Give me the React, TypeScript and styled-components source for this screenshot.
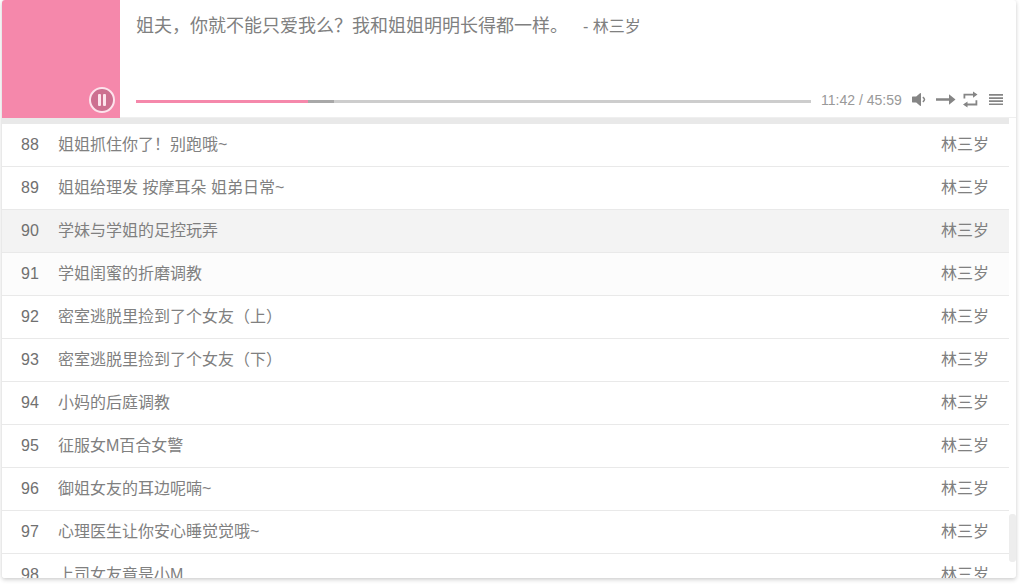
import React from "react";
import styled, { createGlobalStyle } from "styled-components";

const GlobalStyle = createGlobalStyle`
  *, *::before, *::after { box-sizing: border-box; }
  html, body, #root { height: 100%; }
  body {
    margin: 0;
    background: #fff;
    color: #808080;
    font-family: "Liberation Sans", "Noto Sans CJK SC", sans-serif;
    font-size: 16px;
    overflow: hidden;
  }
  button { font: inherit; color: inherit; border: 0; background: none; padding: 0; cursor: pointer; }
`;

const Page = styled.div`
  height: 100%;
  padding: 0 8px 9px 2px;
`;

const Player = styled.main`
  display: flex;
  flex-direction: column;
  height: 100%;
  background: #fff;
  border-radius: 3px;
  box-shadow: 0 2px 4px rgba(0, 0, 0, 0.16), 0 0 4px rgba(0, 0, 0, 0.06);
  overflow: hidden;
`;

const Header = styled.section`
  display: flex;
  flex: none;
`;

const Cover = styled.div`
  display: flex;
  align-items: flex-end;
  justify-content: flex-end;
  flex: none;
  width: 118px;
  height: 118px;
  padding: 5px;
  background: #f588ab;
`;

const PauseButton = styled.button`
  display: flex;
  align-items: center;
  justify-content: center;
  width: 26px;
  height: 26px;
  border: 2px solid #fde3ec;
  border-radius: 50%;
  background: #cd6f90;
`;

const Info = styled.div`
  display: flex;
  flex: 1;
  flex-direction: column;
  justify-content: space-between;
  min-width: 0;
  padding: 13px 10px 7px 16px;
  border-bottom: 1px solid #efefef;
`;

const Heading = styled.div`
  display: flex;
  align-items: baseline;
  gap: 15px;
  line-height: 26px;
  white-space: nowrap;
`;

const Title = styled.h1`
  margin: 0;
  font-size: 18px;
  font-weight: 400;
`;

const Controls = styled.div`
  display: flex;
  align-items: center;
  height: 20px;
  color: #858585;
`;

const Progress = styled.input.attrs({ type: "range" })`
  flex: 1;
  min-width: 0;
  height: 3px;
  margin: 2px 10px 0 0;
  appearance: none;
  background: linear-gradient(
    to right,
    #f588ab 0 25.5%,
    #a8a8a8 25.5% 29.3%,
    #cdcdcd 29.3% 100%
  );
  cursor: pointer;
  &::-webkit-slider-thumb { appearance: none; width: 0; height: 0; }
`;

const Time = styled.span`
  width: 83px;
  margin-right: 7px;
  color: #999;
  font-size: 14px;
  white-space: nowrap;
`;

const IconButtons = styled.div`
  display: flex;
  gap: 5px;
`;

const IconButton = styled.button`
  display: flex;
  align-items: center;
  justify-content: center;
  width: 20px;
  height: 20px;
`;

const ListArea = styled.section`
  display: flex;
  flex: 1;
  min-height: 0;
`;

const Playlist = styled.ol`
  flex: 1;
  min-height: 0;
  margin: 0;
  padding: 0;
  list-style: none;
  border-top: 6px solid #e9e9e9;
  overflow: hidden;
`;

const Track = styled.li<{ $tone?: string }>`
  display: flex;
  align-items: baseline;
  height: 43px;
  padding: 0 20px 0 19px;
  border-bottom: 1px solid #e9e9e9;
  background: ${({ $tone }) => $tone ?? "#fff"};
  line-height: 42px;
  white-space: nowrap;
  cursor: pointer;
`;

const TrackNumber = styled.span`
  width: 37px;
  color: #707070;
`;

const TrackTitle = styled.span`
  flex: 1;
  min-width: 0;
`;

const ScrollRail = styled.div`
  display: flex;
  flex: none;
  flex-direction: column;
  justify-content: flex-end;
  width: 7px;
  padding-bottom: 16px;
`;

const ScrollThumb = styled.div`
  height: 48px;
  border-radius: 3px;
  background: #ededed;
`;

const artist = "林三岁";

const tracks: { id: number; title: string; tone?: string }[] = [
  { id: 88, title: "姐姐抓住你了！别跑哦~" },
  { id: 89, title: "姐姐给理发 按摩耳朵 姐弟日常~" },
  { id: 90, title: "学妹与学姐的足控玩弄", tone: "#f3f3f3" },
  { id: 91, title: "学姐闺蜜的折磨调教", tone: "#fcfcfc" },
  { id: 92, title: "密室逃脱里捡到了个女友（上）" },
  { id: 93, title: "密室逃脱里捡到了个女友（下）" },
  { id: 94, title: "小妈的后庭调教" },
  { id: 95, title: "征服女M百合女警" },
  { id: 96, title: "御姐女友的耳边呢喃~" },
  { id: 97, title: "心理医生让你安心睡觉觉哦~" },
  { id: 98, title: "上司女友竟是小M" },
];

export default function App() {
  return (
    <>
      <GlobalStyle />
      <Page>
        <Player>
          <Header>
            <Cover>
              <PauseButton aria-label="暂停">
                <svg width="10" height="12" viewBox="0 0 10 12" fill="#fde3ec">
                  <rect x="1" y="0" width="3" height="12" rx="1" />
                  <rect x="6" y="0" width="3" height="12" rx="1" />
                </svg>
              </PauseButton>
            </Cover>
            <Info>
              <Heading>
                <Title>姐夫，你就不能只爱我么？我和姐姐明明长得都一样。</Title>
                <span>- {artist}</span>
              </Heading>
              <Controls>
                <Progress aria-label="播放进度" min={0} max={2759} defaultValue={702} />
                <Time>11:42 / 45:59</Time>
                <IconButtons>
                  <IconButton aria-label="音量">
                    <svg width="20" height="20" viewBox="0 0 20 20" fill="currentColor">
                      <path d="M1.6 6.6h3.6L9 3.2q1-.6 1 .5v11.6q0 1.100-1 .5L5.200 12.400H1.600q-.6 0-.6-.6V7.200q0-.6.6-.6z" />
                      <path d="M11.8 7.200q3.400 2.300 0 4.600" fill="none" stroke="currentColor" strokeWidth="1.500" />
                    </svg>
                  </IconButton>
                  <IconButton aria-label="顺序播放">
                    <svg width="20" height="20" viewBox="0 0 20 20" fill="currentColor">
                      <path d="M0 8.300h13V4.300L19.500 9.500 13 14.700v-4H0z" />
                    </svg>
                  </IconButton>
                  <IconButton aria-label="循环播放">
                    <svg width="20" height="20" viewBox="0 0 20 20" fill="currentColor">
                      <path d="M2.500 8.500V3.700H12V1.500l4.500 3.100L12 7.700V5.500H4.300v3zM16.300 10.200v5.200H6.500v2.200L2 14.500l4.500-3.100v2.200h8v-3.400z" />
                    </svg>
                  </IconButton>
                  <IconButton aria-label="播放列表">
                    <svg width="20" height="20" viewBox="0 0 20 20" fill="currentColor">
                      <path d="M3 4.100h14v1.700H3zM3 7.200h14v1.700H3zM3 10.300h14v1.700H3zM3 13.400h14v1.700H3z" />
                    </svg>
                  </IconButton>
                </IconButtons>
              </Controls>
            </Info>
          </Header>
          <ListArea>
            <Playlist>
              {tracks.map((track) => (
                <Track key={track.id} $tone={track.tone}>
                  <TrackNumber>{track.id}</TrackNumber>
                  <TrackTitle>{track.title}</TrackTitle>
                  <span>{artist}</span>
                </Track>
              ))}
            </Playlist>
            <ScrollRail>
              <ScrollThumb />
            </ScrollRail>
          </ListArea>
        </Player>
      </Page>
    </>
  );
}
